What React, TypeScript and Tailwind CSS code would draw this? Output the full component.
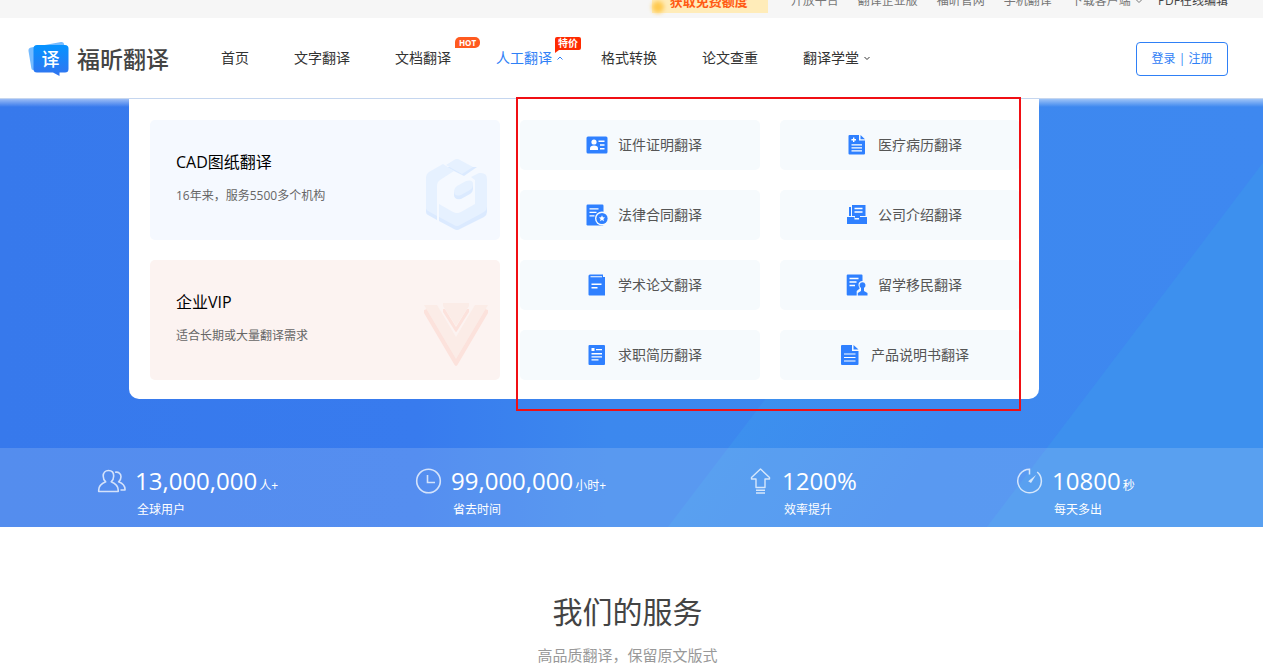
import type { ReactNode } from 'react';

const topLinks = ['开放平台', '翻译企业版', '福昕官网', '手机翻译', '下载客户端', 'PDF在线编辑'];

const navItems = [
  { label: '首页' },
  { label: '文字翻译' },
  { label: '文档翻译', badge: 'hot' },
  { label: '人工翻译', badge: 'sale', caret: 'up', active: true },
  { label: '格式转换' },
  { label: '论文查重' },
  { label: '翻译学堂', caret: 'down' },
];

const CardIcon = () => (
  <svg width="22" height="22" viewBox="0 0 22 22" fill="#2f80ff">
    <rect x="0.5" y="2.5" width="21" height="17" rx="1.5" />
    <g fill="#fff">
      <circle cx="8" cy="8" r="2.6" />
      <path d="M4 16v-1.800c0-1.700 1.600-2.700 4-2.700s4 1 4 2.700V16z" />
      <path d="M12.500 6.500h6V8h-6zM14 10.300h4.500v1.500H14zM14 14h4.500v1.500H14z" />
    </g>
  </svg>
);

const ContractIcon = () => (
  <svg width="22" height="22" viewBox="0 0 22 22" fill="#2f80ff">
    <rect x="0.500" y="0.500" width="17" height="21" rx="1.200" />
    <path d="M3.500 4.800h9M3.500 8.300h7M3.500 11.800h5" stroke="#fff" strokeWidth="1.300" />
    <circle cx="16" cy="14.500" r="7" fill="#f6fafd" />
    <circle cx="16" cy="14.500" r="5.600" />
    <path d="m16 11.300.9 2 2.200.2-1.700 1.500.5 2.200-1.900-1.200-1.900 1.200.5-2.200-1.700-1.500 2.200-.2z" fill="#fff" />
  </svg>
);

const PaperIcon = () => (
  <svg width="22" height="22" viewBox="0 0 22 22" fill="#2f80ff">
    <path d="M4 .500h13V3h2v18.500H3.500a1 1 0 0 1-1-1V2A1.500 1.500 0 0 1 4 .500z" />
    <path d="M4.500 2.300H16v1H4.500zM5.500 9.500h10V11h-10zM5.500 13h6v1.400h-6z" fill="#fff" />
  </svg>
);

const ResumeIcon = () => (
  <svg width="22" height="22" viewBox="0 0 22 22" fill="#2f80ff">
    <rect x="2.500" y="1" width="16.500" height="20" rx="1" />
    <path d="M5.500 4h3v3h-3zM10 5h6v1.300h-6zM5.500 9h10.500v1.400H5.500zM5.500 12.200h10.500v1.400H5.500zM5.500 15.200h7v1.400h-7z" fill="#fff" />
  </svg>
);

const MedicalIcon = () => (
  <svg width="22" height="22" viewBox="0 0 22 22" fill="#2f80ff">
    <path d="M3.500 1H13v5.500h6v13a1 1 0 0 1-1 1H3.500a1 1 0 0 1-1-1V2a1 1 0 0 1 1-1zM14.500 1l4.500 4.200h-4.500z" />
    <path d="M7 3.500h1.400v1.600H10v1.400H8.400v1.600H7V6.500H5.400V5.100H7zM5.500 10.200h10.500v1.300H5.500zM5.500 13.200h10.500v1.300H5.500zM5.500 16.200h10.500v1.300H5.500z" fill="#fff" />
  </svg>
);

const CompanyIcon = () => (
  <svg width="22" height="22" viewBox="0 0 22 22" fill="#2f80ff">
    <path d="M3 3h2v9H3zM6 1h13.500v11H14v2H9v-2H6z" />
    <path d="M8.500 4.500h8M8.500 8h8" stroke="#fff" strokeWidth="1.400" />
    <path d="M1 13h7.500v2.500h4.500V13h8v7H1z" />
  </svg>
);

const StudyIcon = () => (
  <svg width="22" height="22" viewBox="0 0 22 22" fill="#2f80ff">
    <path d="M1.500.500h14a1 1 0 0 1 1 1V7c-2.500 0-4.300 1.800-4 4.300.2 1.500 1 2.200 1.200 3.200l-3 2.500v4.500h-9a1 1 0 0 1-1-1v-19a1 1 0 0 1 1-1z" />
    <path d="M3.500 4.500h9M3.500 8h7M3.500 11.500h5.500" stroke="#fff" strokeWidth="1.300" />
    <path d="M16.500 8.300a3 3 0 0 1 1.500 5.600v3l3.500 2v2.600h-9.700v-2.600l3.200-2v-3a3 3 0 0 1 1.500-5.600z" />
  </svg>
);

const ManualIcon = () => (
  <svg width="22" height="22" viewBox="0 0 22 22" fill="#2f80ff">
    <path d="M3 1h10v6h6.500v13a1 1 0 0 1-1 1H3a1 1 0 0 1-1-1V2a1 1 0 0 1 1-1zM14.500 1l5 4.500h-5z" />
    <path d="M5 10h11.500M5 13.500h11.500M5 17h11.500" stroke="#fff" strokeWidth="1.200" />
  </svg>
);

const services = [
  { label: '证件证明翻译', icon: <CardIcon /> },
  { label: '医疗病历翻译', icon: <MedicalIcon /> },
  { label: '法律合同翻译', icon: <ContractIcon /> },
  { label: '公司介绍翻译', icon: <CompanyIcon /> },
  { label: '学术论文翻译', icon: <PaperIcon /> },
  { label: '留学移民翻译', icon: <StudyIcon /> },
  { label: '求职简历翻译', icon: <ResumeIcon /> },
  { label: '产品说明书翻译', icon: <ManualIcon /> },
];

const UsersIcon = () => (
  <svg width="30" height="28" viewBox="0 0 30 28" fill="none" stroke="#fff" strokeOpacity="0.750" strokeWidth="1.600" strokeLinejoin="round">
    <path d="M11.500 3.500c3.200 0 5.200 2.300 5.200 5.500 0 2.500-1 4.500-2.500 5.800 3.500 1.500 7 3.500 7 8.200v1.500h-19.500V23c0-4.700 3.500-6.700 7-8.200C7.200 13.500 6.200 11.500 6.200 9c0-3.200 2.100-5.500 5.300-5.500z" />
    <path d="M18 5.300c3.500-.8 6 1.200 6 4.500 0 2.200-.9 3.900-2.400 5 3.200 1.300 6.400 3.200 6.400 7.400V23h-4.500" />
  </svg>
);

const ClockIcon = () => (
  <svg width="28" height="28" viewBox="0 0 28 28" fill="none" stroke="#fff" strokeOpacity="0.750" strokeWidth="1.600">
    <circle cx="13.500" cy="14" r="11.800" />
    <path d="M12.500 8v7.500h7.500" />
  </svg>
);

const ArrowIcon = () => (
  <svg width="24" height="28" viewBox="0 0 24 28" fill="none" stroke="#fff" strokeOpacity="0.750" strokeWidth="1.400" strokeLinejoin="round">
    <path d="M10.500 2l9 8.500v1.500h-4.500v8.500H6V12H1.500v-1.500zM6 23.200h9M6 26h9" />
  </svg>
);

const GaugeIcon = () => (
  <svg width="28" height="28" viewBox="0 0 28 28" fill="none" stroke="#fff" strokeOpacity="0.750" strokeWidth="1.500">
    <path d="M13.500 7.500V2.200A11.800 11.800 0 1 0 21.200 5" />
    <path d="M20 8l-5 8-2.800-1.800z" fill="#fff" fillOpacity="0.750" stroke="none" />
  </svg>
);

const stats = [
  { value: '13,000,000', unit: '人+', label: '全球用户', icon: <UsersIcon /> },
  { value: '99,000,000', unit: '小时+', label: '省去时间', icon: <ClockIcon /> },
  { value: '1200%', unit: '', label: '效率提升', icon: <ArrowIcon /> },
  { value: '10800', unit: '秒', label: '每天多出', icon: <GaugeIcon /> },
];

const CubeArt = () => (
  <svg width="64" height="74" viewBox="0 0 64 74">
    <g fill="#dbeaff">
      <path d="M21 9h31l-13 9z" />
      <path d="M1 50l11 7v5L3 57q-2-1-2-3zM14 58l18 9 30-19v6q0 3-3 5L35 71q-3 2-6 0L14 63z" />
      <path d="M29 34l19-7v4q0 3-3 5l-9 5q-7 1-7-4z" />
    </g>
    <g fill="#e6f1ff">
      <path d="M21 7l8-5q3-2 6 0l13 7-11 7z" />
      <path d="M1 20q0-4 3-6l14-8 11 7-14 9q-3 2-3 6v30L3 53q-2-1-2-3z" />
      <path d="M14 46l14 8q4 2 8 0l14-8V22l-4-3 8-4q8-1 8 6v28q0 3-3 5L35 67q-3 2-6 0l-15-8z" />
      <path d="M29 33q0-3 3-5l9-5q7-2 7 3v1q0 3-3 5l-9 5q-7 2-7-4z" />
    </g>
  </svg>
);

const VArt = () => (
  <svg width="66" height="66" viewBox="0 0 66 66">
    <path d="M1 8l3-1 29 49L62 7l3 1v3L35 62q-2 4-4 0L1 11z" fill="#fce2dc" />
    <path d="M1 3h13l19 32L52 3h13L33 57z" fill="#fbece7" />
    <path d="M20 7h2l11 18L44 7h2v3L34 29q-1 2-2 0L20 10z" fill="#fce2dc" />
    <path d="M20 1h26v3L33 24 20 4z" fill="#fbece7" />
  </svg>
);

const Logo = () => (
  <svg width="42" height="36" viewBox="0 0 42 36">
    <defs>
      <linearGradient id="logo" x1="0" y1="0" x2="0" y2="1">
        <stop offset="0" stopColor="#0593ff" />
        <stop offset="1" stopColor="#3274f0" />
      </linearGradient>
    </defs>
    <path d="M3 6.500 33 1c1.500-.3 2.800.5 3 2l1 5L9 30l-4-1c-1 0-1.500-1-1.700-2L.5 10C.3 8 1 7 3 6.500z" fill="#75bbff" />
    <path d="M9 4h28a3.500 3.500 0 0 1 3.500 3.500V28a3.500 3.500 0 0 1-3.500 3.500h-5.500V35L25 31.500H9A3.500 3.500 0 0 1 5.500 28V7.500A3.500 3.500 0 0 1 9 4z" fill="url(#logo)" />
    <text x="22.500" y="24.500" fontSize="18" fill="#fff" textAnchor="middle">译</text>
  </svg>
);

const Caret = ({ up }: { up?: boolean }) => (
  <svg width="8" height="8" viewBox="0 0 8 8" fill="none" stroke="currentColor" className="ml-1 -mr-2">
    <path d={up ? 'M1.500 5.500 4 3l2.500 2.500' : 'M1.500 3 4 5.500 6.500 3'} />
  </svg>
);

const HotBadge = () => (
  <span className="absolute -top-[11px] left-full ml-1 h-[11px] rounded-t-[5px] rounded-br-[5px] bg-[#ff5a1f] px-1 text-[8px] leading-[11px] font-bold text-white">
    HOT
  </span>
);

const SaleBadge = () => (
  <span className="absolute -top-[11px] left-full ml-[3px] h-[13px] rounded-t-[2px] rounded-br-[2px] bg-[#ff2a00] px-[3px] text-[10px] leading-[13px] font-bold whitespace-nowrap text-white">
    特价
    <svg width="4" height="3" viewBox="0 0 4 3" className="absolute top-full left-0">
      <path d="M0 0h4L0 3z" fill="#ff2a00" />
    </svg>
  </span>
);

type PromoCardProps = { title: string; text: string; className: string; art: ReactNode };

const PromoCard = ({ title, text, className, art }: PromoCardProps) => (
  <a href="#" className={`flex h-[120px] items-center justify-between rounded-[5px] pr-[11px] pl-[26px] ${className}`}>
    <div className="pb-1">
      <h3 className="text-base leading-6 text-black">{title}</h3>
      <p className="mt-3 text-xs leading-5 text-[#666]">{text}</p>
    </div>
    <div className="mt-[30px]">{art}</div>
  </a>
);

const TopBar = () => (
  <div className="flex h-[18px] items-end justify-end overflow-hidden bg-[#f6f6f6] pr-[35px]">
    <div className="flex h-9 items-center gap-[19px] pt-0.5 text-xs text-[#777]">
      <a href="#" className="relative mr-1 h-6 w-[116px] bg-[#ffecb9] pl-[18px] text-[13px] leading-6 font-bold text-[#ff5a14]">
        <span className="absolute bottom-0 left-0 h-3 w-3 rounded-full bg-[#ffc94f] blur-[2px]" />
        获取免费额度
      </a>
      {topLinks.map((link) => (
        <a key={link} href="#" className="flex items-center last:ml-1 last:text-[#444]">
          {link}
          {link === '下载客户端' && <Caret />}
        </a>
      ))}
    </div>
  </div>
);

const Header = () => (
  <header className="flex h-20 items-center bg-white pr-[35px] pl-[28px]">
    <a href="#" className="mt-0.5 flex items-center gap-[7px] text-[23px] font-medium text-[#444]">
      <Logo />
      福昕翻译
    </a>
    <nav className="ml-[52px] flex gap-[45px] text-sm text-[#333]">
      {navItems.map((item) => (
        <a key={item.label} href="#" className={item.active ? 'flex items-center text-[#2f80f6]' : 'flex items-center'}>
          <span className="relative">
            {item.label}
            {item.badge === 'hot' && <HotBadge />}
            {item.badge === 'sale' && <SaleBadge />}
          </span>
          {item.caret && <Caret up={item.caret === 'up'} />}
        </a>
      ))}
    </nav>
    <button className="mt-0.5 ml-auto h-[34px] w-[92px] rounded border border-[#2f80f6] text-xs text-[#2f80f6]">登录 | 注册</button>
  </header>
);

const ServiceMenu = () => (
  <div className="relative ml-[129px] flex max-w-[910px] gap-5 rounded-b-[10px] bg-white pt-[21px] pr-[19px] pb-[19px] pl-[21px]">
    <div className="flex w-[350px] flex-col gap-5">
      <PromoCard title="CAD图纸翻译" text="16年来，服务5500多个机构" className="bg-[#f5f9ff]" art={<CubeArt />} />
      <PromoCard title="企业VIP" text="适合长期或大量翻译需求" className="bg-[#fcf3f1]" art={<VArt />} />
    </div>
    <div className="grid flex-1 grid-cols-2 gap-5">
      {services.map((service) => (
        <a
          key={service.label}
          href="#"
          className="flex h-[50px] items-center justify-center gap-[10px] rounded-[5px] bg-[#f6fafd] pl-2 text-sm text-[#555]"
        >
          {service.icon}
          {service.label}
        </a>
      ))}
    </div>
    <div className="absolute -top-[2px] right-[18px] -bottom-3 w-[505px] border-2 border-[#f00f14]" />
  </div>
);

const Hero = () => (
  <section className="relative border-t border-[#c5d6ef] bg-[#387bed]">
    <svg className="absolute inset-0 h-full w-full" viewBox="0 0 1263 429" preserveAspectRatio="none">
      <defs>
        <linearGradient id="sky" x1="0" y1="0" x2="1" y2="0">
          <stop offset="0" stopColor="#3779ec" />
          <stop offset="0.330" stopColor="#387bee" />
          <stop offset="0.480" stopColor="#3c88ee" />
          <stop offset="1" stopColor="#3e88f0" />
        </linearGradient>
        <linearGradient id="beam" gradientUnits="userSpaceOnUse" x1="700" y1="350" x2="860" y2="460">
          <stop offset="0" stopColor="#3d91ee" />
          <stop offset="1" stopColor="#3d91ee" stopOpacity="0" />
        </linearGradient>
      </defs>
      <rect width="1263" height="429" fill="url(#sky)" />
      <path d="M668 429 766 300h250L920 429z" fill="url(#beam)" />
      <path d="M987 429 1263 64v365z" fill="#3d90ee" />
    </svg>
    <div className="absolute inset-x-0 top-0 h-2 bg-linear-to-b from-white/50 to-transparent" />
    <ServiceMenu />
    <div className="relative mt-[49px] grid h-[79px] grid-cols-[318fr_335fr_266fr_247fr] bg-white/15 pl-[97px] text-white">
      {stats.map((stat) => (
        <div key={stat.label} className="flex gap-2 pt-[19px]">
          {stat.icon}
          <div>
            <p className="text-2xl leading-7">
              {stat.value}
              <span className="ml-[2px] text-xs">{stat.unit}</span>
            </p>
            <p className="mt-[5px] ml-[2px] text-xs leading-5">{stat.label}</p>
          </div>
        </div>
      ))}
    </div>
  </section>
);

const App = () => (
  <div className="min-h-screen bg-white font-['Open_Sans','Noto_Sans_CJK_SC',sans-serif]">
    <TopBar />
    <Header />
    <main>
      <Hero />
      <section className="pt-[61px] pr-2 text-center">
        <h2 className="text-3xl leading-[48px] text-[#444]">我们的服务</h2>
        <p className="mt-[7px] text-[15px] leading-6 text-[#999]">高品质翻译，保留原文版式</p>
      </section>
    </main>
  </div>
);

export default App;
